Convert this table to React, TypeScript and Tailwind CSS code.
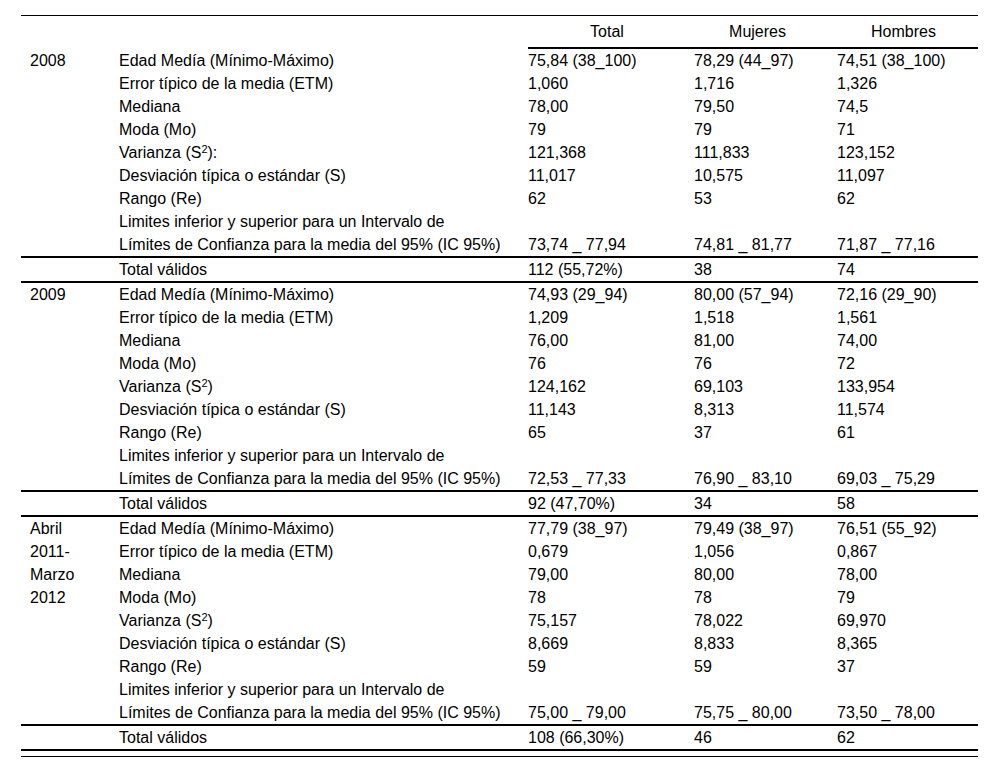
import React from "react";

type Row = { label: React.ReactNode; values: [string, string, string] };
type Section = { year: React.ReactNode; rows: Row[]; total: [string, string, string] };

const varianza = (colon: boolean) => (
  <>
    Varianza (S<sup className="text-[11px]">2</sup>){colon ? ":" : ""}
  </>
);

const limitsTop = "Limites inferior y superior para un Intervalo de";
const limitsBottom = "Límites de Confianza para la media del 95% (IC 95%)";

const sections: Section[] = [
  {
    year: "2008",
    rows: [
      { label: "Edad Medía (Mínimo-Máximo)", values: ["75,84 (38_100)", "78,29 (44_97)", "74,51 (38_100)"] },
      { label: "Error típico de la media (ETM)", values: ["1,060", "1,716", "1,326"] },
      { label: "Mediana", values: ["78,00", "79,50", "74,5"] },
      { label: "Moda (Mo)", values: ["79", "79", "71"] },
      { label: varianza(true), values: ["121,368", "111,833", "123,152"] },
      { label: "Desviación típica o estándar (S)", values: ["11,017", "10,575", "11,097"] },
      { label: "Rango (Re)", values: ["62", "53", "62"] },
      { label: limitsTop, values: ["", "", ""] },
      { label: limitsBottom, values: ["73,74 _ 77,94", "74,81 _ 81,77", "71,87 _ 77,16"] },
    ],
    total: ["112 (55,72%)", "38", "74"],
  },
  {
    year: "2009",
    rows: [
      { label: "Edad Medía (Mínimo-Máximo)", values: ["74,93 (29_94)", "80,00 (57_94)", "72,16 (29_90)"] },
      { label: "Error típico de la media (ETM)", values: ["1,209", "1,518", "1,561"] },
      { label: "Mediana", values: ["76,00", "81,00", "74,00"] },
      { label: "Moda (Mo)", values: ["76", "76", "72"] },
      { label: varianza(false), values: ["124,162", "69,103", "133,954"] },
      { label: "Desviación típica o estándar (S)", values: ["11,143", "8,313", "11,574"] },
      { label: "Rango (Re)", values: ["65", "37", "61"] },
      { label: limitsTop, values: ["", "", ""] },
      { label: limitsBottom, values: ["72,53 _ 77,33", "76,90 _ 83,10", "69,03 _ 75,29"] },
    ],
    total: ["92 (47,70%)", "34", "58"],
  },
  {
    year: (
      <>
        Abril
        <br />
        2011-
        <br />
        Marzo
        <br />
        2012
      </>
    ),
    rows: [
      { label: "Edad Medía (Mínimo-Máximo)", values: ["77,79 (38_97)", "79,49 (38_97)", "76,51 (55_92)"] },
      { label: "Error típico de la media (ETM)", values: ["0,679", "1,056", "0,867"] },
      { label: "Mediana", values: ["79,00", "80,00", "78,00"] },
      { label: "Moda (Mo)", values: ["78", "78", "79"] },
      { label: varianza(false), values: ["75,157", "78,022", "69,970"] },
      { label: "Desviación típica o estándar (S)", values: ["8,669", "8,833", "8,365"] },
      { label: "Rango (Re)", values: ["59", "59", "37"] },
      { label: limitsTop, values: ["", "", ""] },
      { label: limitsBottom, values: ["75,00 _ 79,00", "75,75 _ 80,00", "73,50 _ 78,00"] },
    ],
    total: ["108 (66,30%)", "46", "62"],
  },
];

export default function App() {
  return (
    <div
      className="min-h-[772px] bg-white pt-[15px] text-[16px] text-black"
      style={{ fontFamily: '"Liberation Sans", Arial, sans-serif' }}
    >
      <div className="ml-[21px] w-[957px] border-t border-black">
        {/* Header */}
        <div className="grid h-[33px] grid-cols-[90px_409px_1fr]">
          <div />
          <div />
          <div className="ml-[8px] grid grid-cols-[158px_143px_149px] border-b-2 border-black">
            <div className="flex items-center justify-center">Total</div>
            <div className="flex items-center justify-center">Mujeres</div>
            <div className="flex items-center justify-center">Hombres</div>
          </div>
        </div>

        {sections.map((s, i) => (
          <div key={i}>
            <div className="flex border-b-2 border-black">
              <div className="w-[90px] shrink-0 pl-[9px] leading-[23px]">{s.year}</div>
              <div className="flex-1">
                {s.rows.map((r, j) => (
                  <div key={j} className="grid h-[23px] grid-cols-[409px_166px_143px_149px] items-center whitespace-nowrap">
                    <div className="pl-[8px]">{r.label}</div>
                    {r.values.map((v, k) => (
                      <div key={k} className="pl-[8px]">{v}</div>
                    ))}
                  </div>
                ))}
              </div>
            </div>
            <div className="grid h-[25px] grid-cols-[90px_409px_166px_143px_149px] items-center border-b-2 border-black">
              <div />
              <div className="pl-[8px]">Total válidos</div>
              {s.total.map((v, k) => (
                <div key={k} className="pl-[8px]">{v}</div>
              ))}
            </div>
          </div>
        ))}
        <div className="mt-[5px] border-t border-black" />
      </div>
    </div>
  );
}
